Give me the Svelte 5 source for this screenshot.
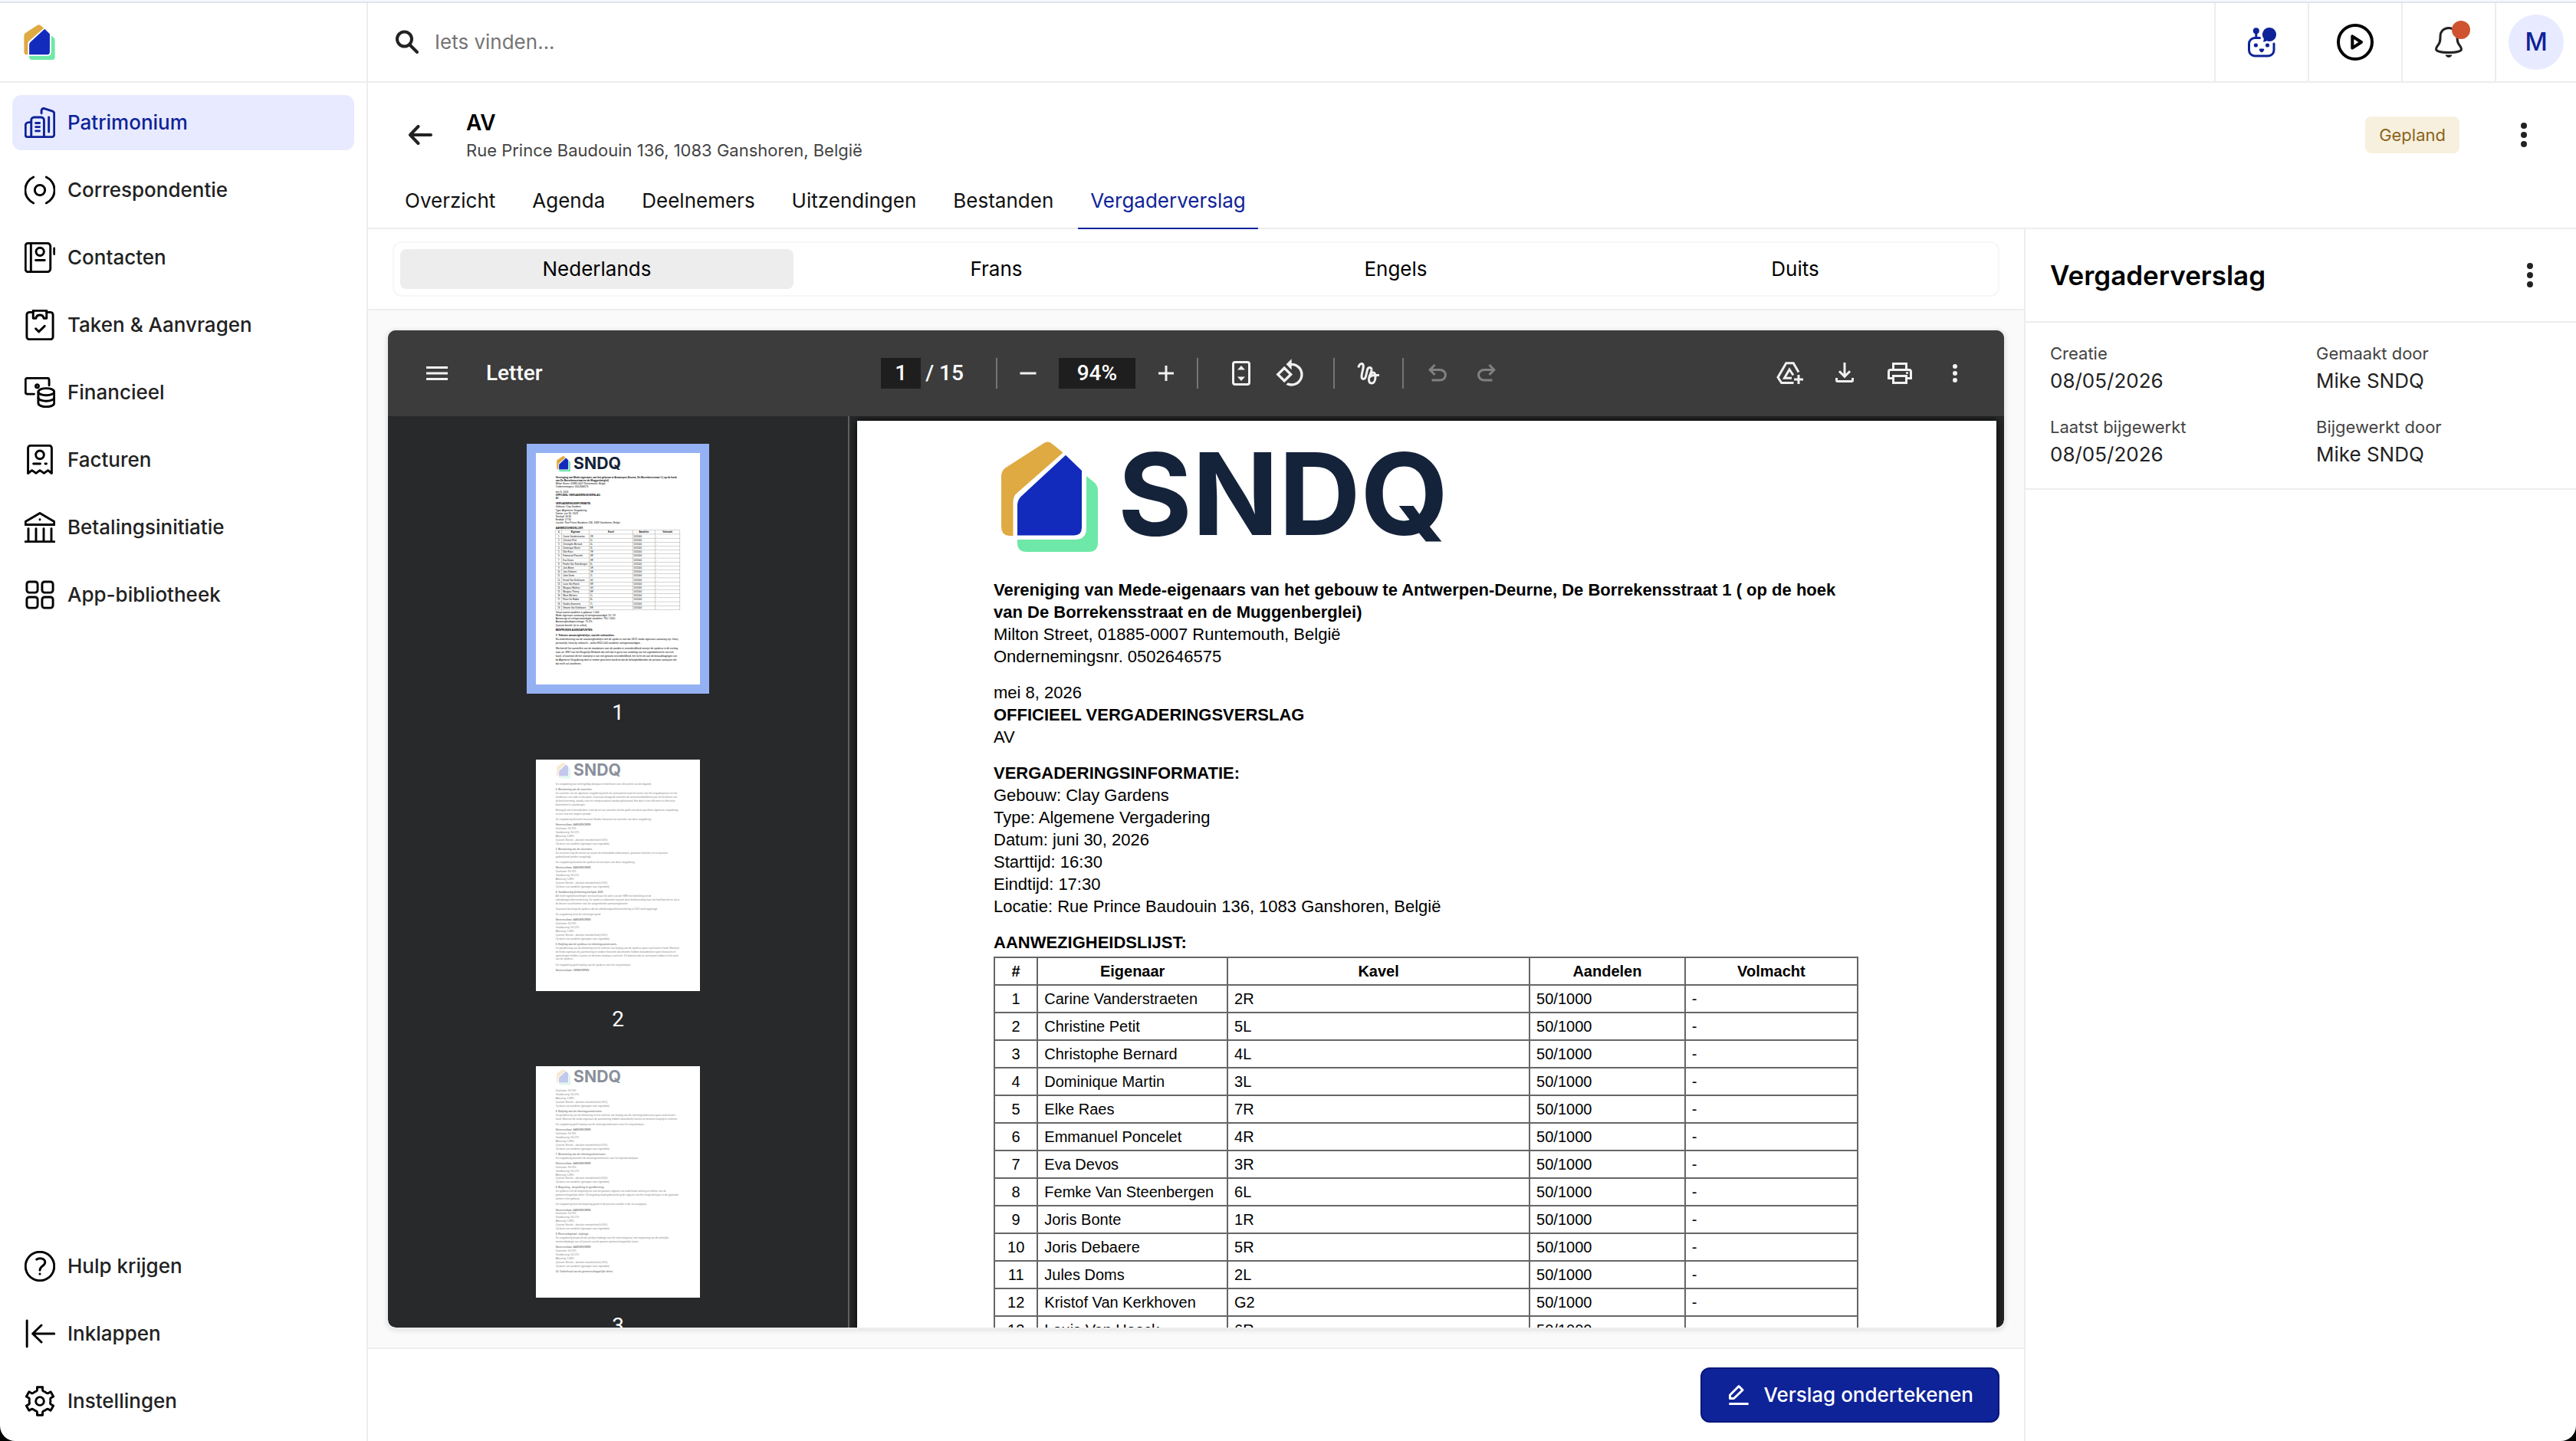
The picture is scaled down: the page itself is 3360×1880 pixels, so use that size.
<script lang="ts">
  type Owner = { name: string; lot: string };
  type Block = { title?: string; lines: string[] };

  // Six teeth around a 24x24 box
  function gearPath() {
    const point = (deg: number, r: number) => {
      const a = (deg * Math.PI) / 180;
      return `${(12 + r * Math.sin(a)).toFixed(2)} ${(12 - r * Math.cos(a)).toFixed(2)}`;
    };
    let d = '';
    for (let i = 0; i < 6; i++) {
      const a = i * 60;
      d += `${i ? 'L' : 'M'}${point(a - 11, 11.2)}L${point(a + 11, 11.2)}L${point(a + 14, 8.8)}Q${point(a + 19, 8)} ${point(a + 25, 8.3)}L${point(a + 35, 8.3)}Q${point(a + 41, 8)} ${point(a + 46, 8.8)}`;
    }
    return d + 'Z';
  }

  const icons: Record<string, string[]> = {
    buildings: [
      'M5.25 23.25h-3a1.5 1.5 0 0 1-1.5-1.5v-7.5a2.5 2.5 0 0 1 2.5-2.5h2',
      'M5.25 23.25V10a2.25 2.25 0 0 1 2.25-2.25H13A2.25 2.25 0 0 1 15.25 10v13.25',
      'M5.25 23.25h16a2 2 0 0 0 2-2V5a2 2 0 0 0-1.3-1.9L15.6.95a1.8 1.8 0 0 0-2.35 1.7v2',
      'M19 7.75v11.5M8.75 12.25h3M8.75 15.35h3M8.75 18.5h3'
    ],
    broadcast: [
      'M7 1.8a11.25 11.25 0 0 0 0 20.4M17 1.8a11.25 11.25 0 0 1 0 20.4',
      'M8 12a4 4 0 1 0 8 0a4 4 0 1 0-8 0'
    ],
    contacts: [
      'M2.75.75h15a2.5 2.5 0 0 1 2.5 2.5v17.5a2.5 2.5 0 0 1-2.5 2.5h-15a2 2 0 0 1-2-2V2.75a2 2 0 0 1 2-2z',
      'M5 .75v22.5M23.25 4.75v4.5M8.75 14.1h7',
      'M9 7.4a3.1 3.1 0 1 0 6.2 0a3.1 3.1 0 1 0-6.2 0'
    ],
    clipboard: [
      'M6.75 2H3.75a2 2 0 0 0-2 2v17.25a2 2 0 0 0 2 2h16.5a2 2 0 0 0 2-2V4a2 2 0 0 0-2-2h-3',
      'M6.75.75h10.5v6h-2.2a3.1 3.1 0 0 0-6.1 0h-2.2z',
      'M8.75 14.9l2.4 2.4 4.6-4.5'
    ],
    finance: [
      'M7.5 13.25H2.25a1.5 1.5 0 0 1-1.5-1.5v-9.5a1.5 1.5 0 0 1 1.5-1.5h15.5a1.5 1.5 0 0 1 1.5 1.5V6.5',
      'M8.7 7a1.2 1.2 0 1 0 2.4 0a1.2 1.2 0 1 0-2.4 0',
      'M10.75 11.5a6.25 2.75 0 1 0 12.5 0a6.25 2.75 0 1 0-12.5 0',
      'M10.75 11.5v8.9c0 1.6 2.8 2.85 6.25 2.85s6.25-1.25 6.25-2.85v-8.9',
      'M10.75 16c0 1.6 2.8 2.75 6.25 2.75S23.25 17.6 23.25 16'
    ],
    invoice: [
      'M2.75 22.5V2.75a2 2 0 0 1 2-2h14.5a2 2 0 0 1 2 2V22.5l-2.9-2.3-3.1 2.2-3.25-2.2L9 22.4l-3.2-2.2z',
      'M8.8 8a3.2 3.2 0 1 0 6.4 0a3.2 3.2 0 1 0-6.4 0',
      'M7 15h5.3M16.2 15h.9'
    ],
    bank: [
      'M.75 9.9V7.5L12 .9l11.25 6.6v2.4z',
      'M3 13v9.5M9 13v9.5M15 13v9.5M21 13v9.5M.75 23.25h22.5M12 5.85v.1'
    ],
    apps: [
      'M3.75 1.75h4.5a2 2 0 0 1 2 2v4.5a2 2 0 0 1-2 2h-4.5a2 2 0 0 1-2-2v-4.5a2 2 0 0 1 2-2z',
      'M15.75 1.75h4.5a2 2 0 0 1 2 2v4.5a2 2 0 0 1-2 2h-4.5a2 2 0 0 1-2-2v-4.5a2 2 0 0 1 2-2z',
      'M3.75 13.75h4.5a2 2 0 0 1 2 2v4.5a2 2 0 0 1-2 2h-4.5a2 2 0 0 1-2-2v-4.5a2 2 0 0 1 2-2z',
      'M15.75 13.75h4.5a2 2 0 0 1 2 2v4.5a2 2 0 0 1-2 2h-4.5a2 2 0 0 1-2-2v-4.5a2 2 0 0 1 2-2z'
    ],
    help: [
      'M.75 12a11.25 11.25 0 1 0 22.5 0a11.25 11.25 0 1 0-22.5 0',
      'M9.4 6.7c.7-.6 1.6-.9 2.8-.9 2.4 0 3.9 1.2 3.9 3 0 3-4.1 3-4.1 6.3M12 18v.1'
    ],
    collapse: ['M1.9 1.75v20.5M6.4 12h16.85M13.2 5.4L6.4 12l6.8 6.6'],
    gear: [gearPath(), 'M8.8 12a3.2 3.2 0 1 0 6.4 0a3.2 3.2 0 1 0-6.4 0']
  };

  const mainNav = [
    { label: 'Patrimonium', icon: 'buildings' },
    { label: 'Correspondentie', icon: 'broadcast' },
    { label: 'Contacten', icon: 'contacts' },
    { label: 'Taken & Aanvragen', icon: 'clipboard' },
    { label: 'Financieel', icon: 'finance' },
    { label: 'Facturen', icon: 'invoice' },
    { label: 'Betalingsinitiatie', icon: 'bank' },
    { label: 'App-bibliotheek', icon: 'apps' }
  ];

  const footerNav = [
    { label: 'Hulp krijgen', icon: 'help' },
    { label: 'Inklappen', icon: 'collapse' },
    { label: 'Instellingen', icon: 'gear' }
  ];

  const tabs = ['Overzicht', 'Agenda', 'Deelnemers', 'Uitzendingen', 'Bestanden', 'Vergaderverslag'];
  const languages = ['Nederlands', 'Frans', 'Engels', 'Duits'];

  const details = [
    { label: 'Creatie', value: '08/05/2026' },
    { label: 'Gemaakt door', value: 'Mike SNDQ' },
    { label: 'Laatst bijgewerkt', value: '08/05/2026' },
    { label: 'Bijgewerkt door', value: 'Mike SNDQ' }
  ];

  const owners: Owner[] = [
    { name: 'Carine Vanderstraeten', lot: '2R' },
    { name: 'Christine Petit', lot: '5L' },
    { name: 'Christophe Bernard', lot: '4L' },
    { name: 'Dominique Martin', lot: '3L' },
    { name: 'Elke Raes', lot: '7R' },
    { name: 'Emmanuel Poncelet', lot: '4R' },
    { name: 'Eva Devos', lot: '3R' },
    { name: 'Femke Van Steenbergen', lot: '6L' },
    { name: 'Joris Bonte', lot: '1R' },
    { name: 'Joris Debaere', lot: '5R' },
    { name: 'Jules Doms', lot: '2L' },
    { name: 'Kristof Van Kerkhoven', lot: 'G2' },
    { name: 'Louis Van Hoeck', lot: '6R' },
    { name: 'Margaux Mathieu', lot: 'G3' },
    { name: 'Margaux Thierry', lot: '8R' },
    { name: 'Marie Mertens', lot: '1L' },
    { name: 'Pieter De Ridder', lot: '8L' },
    { name: 'Sandra Goossens', lot: '7L' },
    { name: 'Simone Van Kerkhoven', lot: '9R' }
  ];

  const totals = [
    'Totaal aantal aandelen in gebouw: 1.000',
    'Mede-eigenaars aanwezig of vertegenwoordigd: 15 / 19',
    'Aanwezige of vertegenwoordigde aandelen: 750 / 1000',
    'Aanwezigheidspercentage: 75.0%',
    'Quorum bereikt: [in te vullen]'
  ];

  const vote: Block = {
    title: 'Stemresultaat: AANGENOMEN',
    lines: [
      'Deelname: 94.74%',
      'Goedkeuring: 94.12%',
      'Afkeuring: 5.88%',
      'Quorum: Bereikt - absolute meerderheid (>50%)',
      'Op basis van aandelen (gewogen naar eigendom)'
    ]
  };

  const secondPage: Block[] = [
    { lines: ['De vergadering kan rechtsgeldig doorgaan en beslissen over alle punten van de dagorde.'] },
    {
      title: '2. Benoeming van de voorzitter.',
      lines: [
        'De voorzitter van de algemene vergadering heeft als voornaamste taak het sturen van het vergaderproces en het handhaven van orde en discipline. Daarnaast draagt de voorzitter de verantwoordelijkheid voor het faciliteren van de besluitvorming, waarbij correcte stemprocedures worden gehanteerd. Het doel is een efficiënte en effectieve bijeenkomst te waarborgen.'
      ]
    },
    {
      lines: [
        'Belangrijk om te benadrukken is dat de rol van voorzitter slechts geldt voor deze specifieke algemene vergadering en niet voor een langere periode.'
      ]
    },
    { lines: ['De vergadering benoemt mevrouw Sandra Goossens tot voorzitter van deze vergadering.'] },
    vote,
    {
      title: '3. Benoeming van de secretaris.',
      lines: [
        'De secretaris legt de notulen op waarin de behandelde onderwerpen, genomen besluiten en actiepunten gedetailleerd worden vastgelegd.'
      ]
    },
    { lines: ['De vergadering benoemt de syndicus tot secretaris van deze vergadering.'] },
    vote,
    {
      title: '4. Goedkeuring afrekening boekjaar 2025',
      lines: [
        'AG heeft ingebrekestellingen verstuurd naar het adres van de VME met betrekking tot de arbeidsongevallenverzekering. De syndicus onderzoekt waarom deze briefwisseling haar niet heeft bereikt en zal in dit dossier tussenkomen voor de aangerekende aanmaningskosten.'
      ]
    },
    { lines: ['Daarnaast bevestigt de syndicus dat de arbeidsongevallenverzekering in 2025 werd opgezegd.'] },
    { lines: ['De vergadering keurt de rekeningen goed.'] },
    vote,
    {
      title: '5. Kwijting aan de syndicus en rekeningcommissaris.',
      lines: [
        'De goedkeuring van de afrekening en het verlenen van kwijting aan de syndicus gaan vaak hand in hand. Wanneer de mede-eigenaars de jaarrekening en andere financiële documenten hebben beoordeeld en geen bezwaren of opmerkingen hebben, kunnen ze besluiten kwijting te verlenen. Dit betekent dat ze vertrouwen hebben in het werk van de syndicus.'
      ]
    },
    { lines: ['De vergadering geeft kwijting aan de syndicus voor het vorig boekjaar.'] },
    { title: 'Stemresultaat: VERWORPEN', lines: [] }
  ];

  const thirdPage: Block[] = [
    { lines: vote.lines },
    {
      title: '6. Kwijting aan de rekeningcommissaris.',
      lines: [
        'De goedkeuring van de afrekening en het verlenen van kwijting aan de rekeningcommissaris gaan vaak hand in hand. Wanneer de mede-eigenaars de jaarrekening hebben beoordeeld, kunnen ze besluiten kwijting te verlenen.'
      ]
    },
    { lines: ['De vergadering geeft kwijting aan de rekeningcommissaris voor het vorig boekjaar.'] },
    vote,
    { title: '7. Benoeming van de rekeningcommissaris.', lines: ['De vergadering benoemt de rekeningcommissaris voor het lopende boekjaar.'] },
    vote,
    {
      title: '8. Begroting - bespreking en goedkeuring.',
      lines: [
        'De syndicus licht de begroting toe voor de gewone uitgaven van onderhoud, werking en beheer van de gemeenschappelijke delen. De begroting wordt gebaseerd op de uitgaven van het vorige boekjaar en de geplande werken in het gebouw.'
      ]
    },
    { lines: ['De vergadering keurt de begroting goed en de provisies worden in die zin aangepast.'] },
    vote,
    {
      title: '9. Reservekapitaal - bijdrage.',
      lines: [
        'De vergadering bespreekt de jaarlijkse bijdrage aan het reservekapitaal, met toepassing van de wettelijke minimumbijdrage van vijf procent van de gewone gemeenschappelijke lasten.'
      ]
    },
    vote,
    { title: '10. Onderhoud van de gemeenschappelijke delen.', lines: [] }
  ];

  let activeNav = $state('Patrimonium');
  let activeTab = $state('Vergaderverslag');
  let activeLanguage = $state('Nederlands');
  let activePage = $state(1);
  let query = $state('');
</script>

{#snippet icon(name: string)}
  <svg class="icon" viewBox="0 0 24 24" aria-hidden="true">
    {#each icons[name] as d}
      <path {d} />
    {/each}
  </svg>
{/snippet}

{#snippet dots()}
  <svg class="dots" viewBox="0 0 40 40" aria-hidden="true">
    <circle cx="20" cy="8" r="4" />
    <circle cx="20" cy="20" r="4" />
    <circle cx="20" cy="32" r="4" />
  </svg>
{/snippet}

{#snippet house()}
  <svg class="house" viewBox="0 0 126 144" aria-hidden="true">
    <path fill="#e0aa43" d="M55 2.500Q61.500-2 67 3.500L80.500 14.500 18.500 69Q15.500 73 15.500 80V123H10Q0 122 0 111V46Q0 39 4.500 35Z" />
    <path fill="#6ee8a6" d="M111 45L122 54Q126 58 126 64V132Q126 144 114 144H33Q21 144 21 132V128H96Q111 128 111 113Z" />
    <path fill="#132bbd" d="M84 17.700L105 38V112Q105 122.500 95 122.500H21V83Q21 77 25.500 72Z" />
  </svg>
{/snippet}

{#snippet blocks(items: Block[])}
  {#each items as block}
    <div class="block spaced">
      {#if block.title}<strong>{block.title}</strong>{/if}
      {#each block.lines as line}
        <span>{line}</span>
      {/each}
    </div>
  {/each}
{/snippet}

{#snippet page(number: number)}
  <div class="page">
    <div class="brand">
      {@render house()}
      <span class="brand-name">SNDQ</span>
    </div>
    {#if number === 1}
      <div class="block">
        <strong>Vereniging van Mede-eigenaars van het gebouw te Antwerpen-Deurne, De Borrekensstraat 1 ( op de hoek van De Borrekensstraat en de Muggenberglei)</strong>
        <span>Milton Street, 01885-0007 Runtemouth, België</span>
        <span>Ondernemingsnr. 0502646575</span>
      </div>
      <div class="block">
        <span>mei 8, 2026</span>
        <strong>OFFICIEEL VERGADERINGSVERSLAG</strong>
        <span>AV</span>
      </div>
      <div class="block">
        <strong>VERGADERINGSINFORMATIE:</strong>
        <span>Gebouw: Clay Gardens</span>
        <span>Type: Algemene Vergadering</span>
        <span>Datum: juni 30, 2026</span>
        <span>Starttijd: 16:30</span>
        <span>Eindtijd: 17:30</span>
        <span>Locatie: Rue Prince Baudouin 136, 1083 Ganshoren, België</span>
      </div>
      <div class="block">
        <strong>AANWEZIGHEIDSLIJST:</strong>
        <table>
          <colgroup>
            <col class="col-number" />
            <col class="col-owner" />
            <col class="col-lot" />
            <col class="col-shares" />
            <col class="col-proxy" />
          </colgroup>
          <thead>
            <tr><th>#</th><th>Eigenaar</th><th>Kavel</th><th>Aandelen</th><th>Volmacht</th></tr>
          </thead>
          <tbody>
            {#each owners as owner, i}
              <tr>
                <td class="number">{i + 1}</td>
                <td>{owner.name}</td>
                <td>{owner.lot}</td>
                <td>50/1000</td>
                <td>-</td>
              </tr>
            {/each}
          </tbody>
        </table>
        {#each totals as line}
          <span>{line}</span>
        {/each}
      </div>
      <div class="block">
        <strong>BESPROKEN AGENDAPUNTEN:</strong>
      </div>
      <div class="block spaced">
        <strong>1. Tekenen aanwezigheidslijst, nazicht volmachten.</strong>
        <span>Na ondertekening van de aanwezigheidslijst stelt de syndicus vast dat 18/21 mede-eigenaars aanwezig zijn, hetzij persoonlijk, hetzij bij volmacht – welke 850/1.000 aandelen vertegenwoordigen.</span>
      </div>
      <div class="block spaced">
        <span>Wat betreft het aanstellen van de mandataris voor de panden in onverdeeldheid verwijst de syndicus in dit verslag naar art. 3§87 van het Burgerlijk Wetboek dat stelt dat in geval van verdeling van het eigendomsrecht van een kavel, of wanneer dit het voorwerp is van een gewone onverdeeldheid, het recht om aan de beraadslagingen van de Algemene Vergadering deel te nemen geschorst wordt tot dat de belanghebbenden de persoon aanwijzen die dat recht zal uitoefenen.</span>
      </div>
    {:else}
      {@render blocks(number === 2 ? secondPage : thirdPage)}
    {/if}
  </div>
{/snippet}

{#snippet nav(items: { label: string; icon: string }[])}
  {#each items as item}
    <a
      href="#{item.icon}"
      class="nav-item"
      class:active={activeNav === item.label}
      onclick={() => (activeNav = item.label)}
    >
      {@render icon(item.icon)}
      {item.label}
    </a>
  {/each}
{/snippet}

<div class="app">
  <div class="strip"></div>

  <aside class="sidebar">
    <a href="#home" class="logo" aria-label="SNDQ">{@render house()}</a>
    <nav class="menu">
      {@render nav(mainNav)}
      <div class="grow"></div>
      {@render nav(footerNav)}
    </nav>
  </aside>

  <main class="main">
    <div class="topbar">
      <label class="search">
        <svg viewBox="0 0 32 32" aria-hidden="true">
          <circle cx="12.500" cy="12" r="9.500" />
          <path d="M20 20l9 9" />
        </svg>
        <input type="search" placeholder="Iets vinden..." aria-label="Zoeken" bind:value={query} />
      </label>
      <button class="top-cell" aria-label="Assistent">
        <svg class="robot" viewBox="0 0 40 40">
          <path d="M17.500 14.500H11A7.500 7.500 0 0 0 3.500 22v8.500A7.500 7.500 0 0 0 11 38h17.500a7.500 7.500 0 0 0 7.500-7.500V22M12.800 6v8" />
          <g class="solid">
            <circle cx="12.800" cy="5.300" r="4" />
            <circle cx="12.400" cy="24" r="2.600" />
            <circle cx="27.500" cy="24" r="2.600" />
            <path d="M17.600 28.400h4.800q1.400.4.700 2-1.300 2.800-3.100 2.800t-3.100-2.800q-.7-1.600.7-2z" />
            <path d="M30 1a9 9 0 1 1-3.500 17.300q-2 1.500-4.800 1.200 1.300-1.700 1-4.200A9 9 0 0 1 30 1z" />
          </g>
        </svg>
      </button>
      <button class="top-cell" aria-label="Video afspelen">
        <svg class="play" viewBox="0 0 48 48">
          <circle cx="24" cy="24" r="22" />
          <path d="M20.300 16.300L32 24l-11.700 7.700z" />
        </svg>
      </button>
      <button class="top-cell bell-cell" aria-label="Meldingen">
        <svg class="bell" viewBox="0 0 36 40">
          <path d="M18 1.500C11.500 1.500 7 6 7 12.500c0 5 0 8-3 11.500-1.500 1.800-2.500 3-2.500 5 0 3 7.500 4.500 16.500 4.500s16.500-1.500 16.500-4.500c0-2-1-3.200-2.500-5-3-3.500-3-6.500-3-11.500 0-6.500-4.500-11-11-11z" />
          <path class="solid" d="M13.500 36.500h9Q21 40 18 40t-4.500-3.500z" />
        </svg>
        <span class="alert"></span>
      </button>
      <div class="top-user">
        <button class="avatar">M</button>
      </div>
    </div>

    <header class="header">
      <div class="title-row">
        <button class="ghost" aria-label="Terug">
          <svg class="back" viewBox="0 0 32 26"><path d="M30 13H3M13.500 2L3 13l10.500 11" /></svg>
        </button>
        <div class="titles">
          <h1>AV</h1>
          <p>Rue Prince Baudouin 136, 1083 Ganshoren, België</p>
        </div>
        <span class="badge">Gepland</span>
        <button class="ghost" aria-label="Meer acties">{@render dots()}</button>
      </div>
      <div class="tabs" role="tablist">
        {#each tabs as tab}
          <button role="tab" aria-selected={activeTab === tab} class:active={activeTab === tab} onclick={() => (activeTab = tab)}>
            {tab}
          </button>
        {/each}
      </div>
    </header>

    <div class="content">
      <section class="report">
        <div class="language-bar">
          <div class="languages">
            {#each languages as language}
              <button class:active={activeLanguage === language} onclick={() => (activeLanguage = language)}>
                {language}
              </button>
            {/each}
          </div>
        </div>

        <div class="viewer-wrap">
          <div class="viewer">
            <div class="toolbar">
              <div class="tools start">
                <button class="tool" aria-label="Menu">
                  <svg viewBox="0 0 40 40"><path d="M6 12.500h28M6 20h28M6 27.500h28" /></svg>
                </button>
                <span class="doc-name">Letter</span>
              </div>
              <div class="tools">
                <input class="page-input" aria-label="Pagina" value="1" />
                <span class="page-total">/ 15</span>
                <span class="divider"></span>
                <button class="tool" aria-label="Uitzoomen">
                  <svg viewBox="0 0 40 40"><path d="M9.500 20h21" /></svg>
                </button>
                <input class="zoom-input" aria-label="Zoom" value="94%" />
                <button class="tool" aria-label="Inzoomen">
                  <svg viewBox="0 0 40 40"><path d="M10 20h20M20 10v20" /></svg>
                </button>
                <span class="divider"></span>
                <div class="pair wide">
                  <button class="tool" aria-label="Passend maken">
                    <svg viewBox="0 0 40 40">
                      <rect x="9.500" y="5.500" width="21" height="29" rx="2.500" />
                      <path class="solid" d="M20 10l5 5.500H15zM20 30l5-5.500H15z" />
                    </svg>
                  </button>
                  <button class="tool" aria-label="Linksom draaien">
                    <svg viewBox="0 0 24 24">
                      <path class="solid" d="M7.340 6.410L.860 12.900l6.490 6.480 6.490-6.480-6.500-6.490zM3.690 12.900l3.660-3.660L11 12.900l-3.660 3.660-3.650-3.660zm15.670-6.260C17.610 4.880 15.300 4 13 4V.760L8.760 5 13 9.240V6c1.790 0 3.580.680 4.950 2.050 2.730 2.730 2.730 7.170 0 9.900C16.580 19.320 14.790 20 13 20c-.970 0-1.940-.210-2.840-.610l-1.490 1.490C10.020 21.620 11.510 22 13 22c2.300 0 4.610-.880 6.360-2.640 3.520-3.510 3.520-9.210 0-12.720z" />
                    </svg>
                  </button>
                </div>
                <span class="divider"></span>
                <div class="pair">
                  <button class="tool" aria-label="Tekenen">
                    <svg viewBox="0 0 40 40">
                      <path d="M7 12.500C7.500 9 9.500 7 11.500 7.500c4.500 1.500-.5 10.500-.5 16.500 0 4.500 4.500 4.500 5.500 0l2-8.500c1-4 5.500-4 5.500 0" />
                      <path d="M24 15.500c0 3.500-3.500 8-3.500 12.500 0 3.500 1.500 5 3.500 5 3.500 0 5-4.500 5-8.500 0-3-1-5.500-3-5.500-3 0-5.500 4.500-5.500 9M20.500 26c2-2.500 4-3.500 7-3.500H34" />
                    </svg>
                  </button>
                </div>
                <span class="divider"></span>
                <div class="pair">
                  <button class="tool" aria-label="Ongedaan maken" disabled>
                    <svg class="undo" viewBox="0 0 24 24">
                      <path class="solid" d="M7 19v-2h7.100q1.575 0 2.737-1T18 13.500 16.838 11 14.100 10H7.800l2.600 2.600L9 14 4 9l5-5 1.400 1.400L7.800 8h6.300q2.425 0 4.163 1.575T20 13.500t-1.737 3.925T14.100 19z" />
                    </svg>
                  </button>
                  <button class="tool" aria-label="Opnieuw" disabled>
                    <svg class="undo" viewBox="0 0 24 24">
                      <path class="solid" d="M17 19v-2H9.900q-1.575 0-2.737-1T6 13.500 7.162 11 9.900 10h6.300l-2.600 2.600L15 14l5-5-5-5-1.400 1.400L16.200 8H9.900q-2.425 0-4.163 1.575T4 13.500t1.737 3.925T9.900 19z" />
                    </svg>
                  </button>
                </div>
              </div>
              <div class="tools end">
                <button class="tool" aria-label="Opslaan in Drive">
                  <svg viewBox="0 0 40 40">
                    <path d="M32 18.500L25.200 6.700H15.800L5 25.300l4.700 7.200H25.500M25 22.500l-5-7.500-6.500 11.200h9.500M32 22v12M26 28h12" />
                  </svg>
                </button>
                <button class="tool" aria-label="Downloaden">
                  <svg viewBox="0 0 40 40"><path d="M20 6v18M13 17.300l7 7 7-7M9.500 26v3a1.500 1.500 0 0 0 1.500 1.500h18a1.500 1.500 0 0 0 1.500-1.500v-3" /></svg>
                </button>
                <button class="tool" aria-label="Afdrukken">
                  <svg viewBox="0 0 40 40">
                    <path d="M11.500 14V7.500h17V14M11 26.500H5.500V18a2.500 2.500 0 0 1 2.500-2.500h24a2.500 2.500 0 0 1 2.500 2.500v8.500H29M11.500 23.500h17v9h-17z" />
                    <circle class="solid" cx="29.500" cy="19.500" r="1.600" />
                  </svg>
                </button>
                <button class="tool" aria-label="Meer">
                  <svg viewBox="0 0 40 40">
                    <g class="solid"><circle cx="20" cy="11" r="3" /><circle cx="20" cy="20" r="3" /><circle cx="20" cy="29" r="3" /></g>
                  </svg>
                </button>
              </div>
            </div>

            <div class="viewer-body">
              <div class="thumbs">
                {#each [1, 2, 3] as number}
                  <button class="thumb" class:active={activePage === number} onclick={() => (activePage = number)}>
                    <span class="sheet">
                      <svg viewBox="0 0 1486 2098" aria-hidden="true">
                        <foreignObject width="1486" height="2098">
                          {@render page(number)}
                        </foreignObject>
                      </svg>
                    </span>
                    <span class="thumb-label">{number}</span>
                  </button>
                {/each}
              </div>
              <div class="stage">
                {@render page(activePage)}
              </div>
            </div>
          </div>
        </div>

        <footer class="actions">
          <button class="primary">
            <svg viewBox="0 0 32 32" aria-hidden="true">
              <path d="M4.500 27.500h23M4.500 20.500V16L16 4.500l5 5L9.500 20.500z" />
            </svg>
            Verslag ondertekenen
          </button>
        </footer>
      </section>

      <aside class="info">
        <div class="info-head">
          <h2>Vergaderverslag</h2>
          <button class="ghost" aria-label="Opties">{@render dots()}</button>
        </div>
        <dl class="details">
          {#each details as detail}
            <div>
              <dt>{detail.label}</dt>
              <dd>{detail.value}</dd>
            </div>
          {/each}
        </dl>
      </aside>
    </div>
  </main>
</div>

<style>
  :global(body) {
    background: #000;
  }

  .app {
    display: grid;
    grid-template-columns: 480px minmax(0, 1fr);
    grid-template-rows: 4px minmax(0, 1fr);
    height: 100vh;
    overflow: hidden;
    border-radius: 0 0 20px 20px;
    background: #fff;
    color: #222;
    font-family: Inter, "Liberation Sans", sans-serif;
    font-size: 26px;
    line-height: 40px;
  }

  .app *,
  .app {
    box-sizing: border-box;
  }

  button,
  input {
    margin: 0;
    padding: 0;
    border: 0;
    background: none;
    color: inherit;
    font: inherit;
  }

  button {
    display: flex;
    align-items: center;
    justify-content: center;
    cursor: pointer;
  }

  svg {
    display: block;
    flex-shrink: 0;
    fill: none;
    stroke: currentColor;
    stroke-linecap: round;
    stroke-linejoin: round;
  }

  .solid {
    fill: currentColor;
    stroke: none;
  }

  .strip {
    grid-column: 1 / -1;
    border-bottom: 2px solid #dfe4ee;
    background: #f6f8fe;
  }

  .sidebar {
    display: flex;
    flex-direction: column;
    border-right: 2px solid #ededed;
  }

  .logo {
    display: flex;
    align-items: center;
    height: 104px;
    padding-left: 31px;
    border-bottom: 2px solid #ededed;
  }

  .house {
    stroke: none;
  }

  .logo .house {
    width: 41px;
    height: 46px;
  }

  .menu {
    display: flex;
    flex: 1;
    flex-direction: column;
    gap: 16px;
    padding: 16px;
  }

  .grow {
    flex: 1;
  }

  .nav-item {
    display: flex;
    align-items: center;
    gap: 16px;
    height: 72px;
    padding: 0 16px;
    border-radius: 12px;
    font-weight: 500;
    color: #222;
    text-decoration: none;
  }

  .nav-item.active {
    background: #e8ebff;
    color: #0f2398;
  }

  .icon {
    width: 40px;
    height: 40px;
    stroke: #000;
    stroke-width: 1.75;
  }

  .nav-item.active .icon {
    stroke: #0f2398;
  }

  .main {
    display: flex;
    flex-direction: column;
    min-height: 0;
  }

  .topbar {
    display: flex;
    height: 104px;
    flex-shrink: 0;
    border-bottom: 2px solid #ededed;
  }

  .search {
    display: flex;
    flex: 1;
    align-items: center;
    gap: 20px;
    padding-left: 35px;
  }

  .search svg {
    width: 32px;
    height: 32px;
    stroke-width: 4;
  }

  .search input {
    flex: 1;
    outline: none;
  }

  .search input::placeholder {
    color: #757575;
    opacity: 1;
  }

  .top-cell {
    width: 122px;
    border-left: 2px solid #ededed;
  }

  .robot {
    width: 40px;
    height: 40px;
    color: #0f2398;
    stroke-width: 3;
  }

  .play {
    width: 48px;
    height: 48px;
    color: #000;
    stroke-width: 4;
  }

  .bell-cell {
    position: relative;
  }

  .bell {
    width: 36px;
    height: 40px;
    stroke-width: 3;
  }

  .alert {
    position: absolute;
    top: 23px;
    right: 32px;
    width: 24px;
    height: 24px;
    border-radius: 50%;
    background: #cf5330;
  }

  .top-user {
    display: flex;
    align-items: center;
    padding: 0 16px;
    border-left: 2px solid #ededed;
  }

  .avatar {
    width: 72px;
    height: 72px;
    border-radius: 50%;
    background: #e8ebff;
    color: #0f2398;
    font-size: 32px;
    font-weight: 500;
  }

  .header {
    flex-shrink: 0;
    padding: 32px 32px 0;
    border-bottom: 2px solid #ededed;
  }

  .title-row {
    display: flex;
    align-items: center;
    padding-bottom: 14px;
  }

  .ghost {
    width: 72px;
    height: 72px;
  }

  .back {
    width: 32px;
    height: 26px;
    stroke-width: 4;
  }

  .dots {
    width: 40px;
    height: 40px;
    fill: #222;
    stroke: none;
  }

  .titles {
    flex: 1;
    padding-left: 24px;
  }

  h1,
  h2,
  p,
  dl,
  dd {
    margin: 0;
  }

  h1 {
    color: #000;
    font-size: 28px;
    font-weight: 600;
    line-height: 40px;
  }

  .titles p {
    color: #444;
    font-size: 22px;
    line-height: 32px;
  }

  .badge {
    margin-right: 48px;
    padding: 8px 18px;
    border-radius: 8px;
    background: #f8f0df;
    color: #8a641c;
    font-size: 22px;
    line-height: 32px;
  }

  .tabs {
    display: flex;
    gap: 16px;
    margin-bottom: -2px;
  }

  .tabs button {
    height: 73px;
    padding: 0 16px;
    border-bottom: 2px solid transparent;
    color: #111;
  }

  .tabs button.active {
    border-color: #0f2398;
    color: #0f2398;
  }

  .content {
    display: grid;
    grid-template-columns: minmax(0, 3fr) minmax(0, 1fr);
    grid-template-rows: minmax(0, 1fr);
    flex: 1;
    min-height: 0;
  }

  .report {
    display: flex;
    flex-direction: column;
  }

  .language-bar {
    padding: 16px 32px;
    border-bottom: 2px solid #ededed;
  }

  .languages {
    display: grid;
    grid-template-columns: repeat(4, 1fr);
    gap: 8px;
    height: 72px;
    padding: 8px;
    border: 2px solid #f7f7f7;
    border-radius: 12px;
  }

  .languages button {
    border-radius: 8px;
    color: #000;
  }

  .languages button.active {
    background: #ededed;
  }

  .viewer-wrap {
    display: flex;
    flex: 1;
    min-height: 0;
    padding: 24px;
    background: #fafafa;
  }

  .viewer {
    display: flex;
    flex: 1;
    flex-direction: column;
    min-width: 0;
    overflow: hidden;
    border: 2px solid #ededed;
    border-radius: 12px;
    background: #28292a;
    background-clip: padding-box;
    box-shadow: 0 2px 6px rgba(0, 0, 0, 0.1);
  }

  .toolbar {
    display: grid;
    grid-template-columns: 1fr auto 1fr;
    flex-shrink: 0;
    height: 112px;
    padding: 0 32px;
    background: #3c3c3c;
    color: #fff;
    font-family: Roboto, sans-serif;
    font-size: 28px;
    font-weight: 500;
  }

  .tools {
    display: flex;
    align-items: center;
  }

  .tools.end {
    justify-content: flex-end;
    gap: 8px;
  }

  .tool {
    width: 64px;
    height: 64px;
    color: #f1f1f1;
  }

  .tool:disabled {
    color: #818181;
  }

  .tool svg {
    width: 40px;
    height: 40px;
    stroke-linecap: butt;
    stroke-linejoin: miter;
    stroke-width: 3;
  }

  .tool .undo {
    width: 36px;
    height: 36px;
  }

  .doc-name {
    padding-left: 32px;
  }

  .page-input,
  .zoom-input {
    height: 40px;
    background: #1e1e1e;
    text-align: center;
  }

  .page-input {
    width: 52px;
  }

  .zoom-input {
    width: 100px;
    margin: 0 8px;
  }

  .page-total {
    padding: 0 42px 0 6px;
  }

  .divider {
    width: 2px;
    height: 40px;
    background: #757575;
  }

  .divider + .tool {
    margin-left: 8px;
  }

  .tool + .divider {
    margin-left: 8px;
  }

  .pair {
    display: flex;
    margin: 0 12px;
  }

  .pair.wide {
    margin: 0 24px;
  }

  .pair:last-child {
    margin-right: 0;
  }

  .viewer-body {
    display: flex;
    flex: 1;
    min-height: 0;
  }

  .thumbs {
    display: flex;
    flex-direction: column;
    align-items: center;
    width: 602px;
    padding-top: 48px;
    overflow: hidden;
    border-right: 2px solid #5f5f5f;
  }

  .thumb {
    flex-direction: column;
    flex-shrink: 0;
  }

  .sheet {
    display: block;
    width: 214px;
    height: 302px;
    background: #fff;
  }

  .sheet svg {
    width: 100%;
    height: 100%;
    opacity: 0.5;
  }

  .thumb.active .sheet {
    outline: 12px solid #93b1f3;
  }

  .thumb.active .sheet svg {
    opacity: 1;
  }

  .thumb-label {
    margin: 20px 0 44px;
    color: #fff;
    font-family: Roboto, sans-serif;
    font-size: 28px;
    line-height: 34px;
  }

  .stage {
    flex: 1;
    min-width: 0;
    overflow: hidden;
    padding: 6px 10px 0;
  }

  .stage .page {
    box-shadow: 0 0 12px #000;
  }

  .page {
    min-height: 2098px;
    padding: 27px 180px 0 178px;
    background: #fff;
    color: #000;
    font-family: "Liberation Sans", Arial, sans-serif;
    font-size: 22px;
    line-height: 29px;
    text-align: left;
  }

  .brand {
    display: flex;
    gap: 26px;
    margin-bottom: 35px;
    padding-left: 10px;
  }

  .brand .house {
    width: 126px;
    height: 144px;
  }

  .brand-name {
    color: #15233a;
    font-family: Inter, sans-serif;
    font-size: 148px;
    font-weight: 700;
    line-height: 138px;
  }

  .block {
    display: flex;
    flex-direction: column;
    margin-bottom: 18px;
  }

  .spaced {
    margin-bottom: 16px;
    line-height: 34px;
  }

  table {
    width: 100%;
    margin: 4px 0 8px;
    border-collapse: collapse;
    table-layout: fixed;
    font-size: 20px;
    line-height: 28px;
  }

  th,
  td {
    height: 36px;
    padding: 0 8px;
    border: 2px solid #666;
  }

  th {
    text-align: center;
  }

  .number {
    text-align: center;
  }

  .col-number {
    width: 5%;
  }

  .col-owner {
    width: 22%;
  }

  .col-lot {
    width: 35%;
  }

  .col-shares {
    width: 18%;
  }

  .col-proxy {
    width: 20%;
  }

  .actions {
    display: flex;
    justify-content: flex-end;
    padding: 24px 32px;
    border-top: 2px solid #ededed;
  }

  .primary {
    gap: 16px;
    height: 72px;
    padding: 0 32px;
    border: 2px solid #06177a;
    border-radius: 12px;
    background: #0f2398;
    color: #fff;
    font-weight: 500;
  }

  .primary svg {
    width: 32px;
    height: 32px;
    stroke-width: 3;
  }

  .info {
    border-left: 2px solid #ededed;
  }

  .info-head {
    display: flex;
    align-items: center;
    justify-content: space-between;
    height: 122px;
    padding: 0 24px 0 32px;
    border-bottom: 2px solid #ededed;
  }

  h2 {
    color: #000;
    font-size: 35px;
    font-weight: 600;
  }

  .details {
    display: grid;
    grid-template-columns: 1fr 1fr;
    gap: 24px 40px;
    padding: 24px 32px;
    border-bottom: 2px solid #ededed;
  }

  dt {
    color: #444;
    font-size: 22px;
    line-height: 32px;
  }
</style>
